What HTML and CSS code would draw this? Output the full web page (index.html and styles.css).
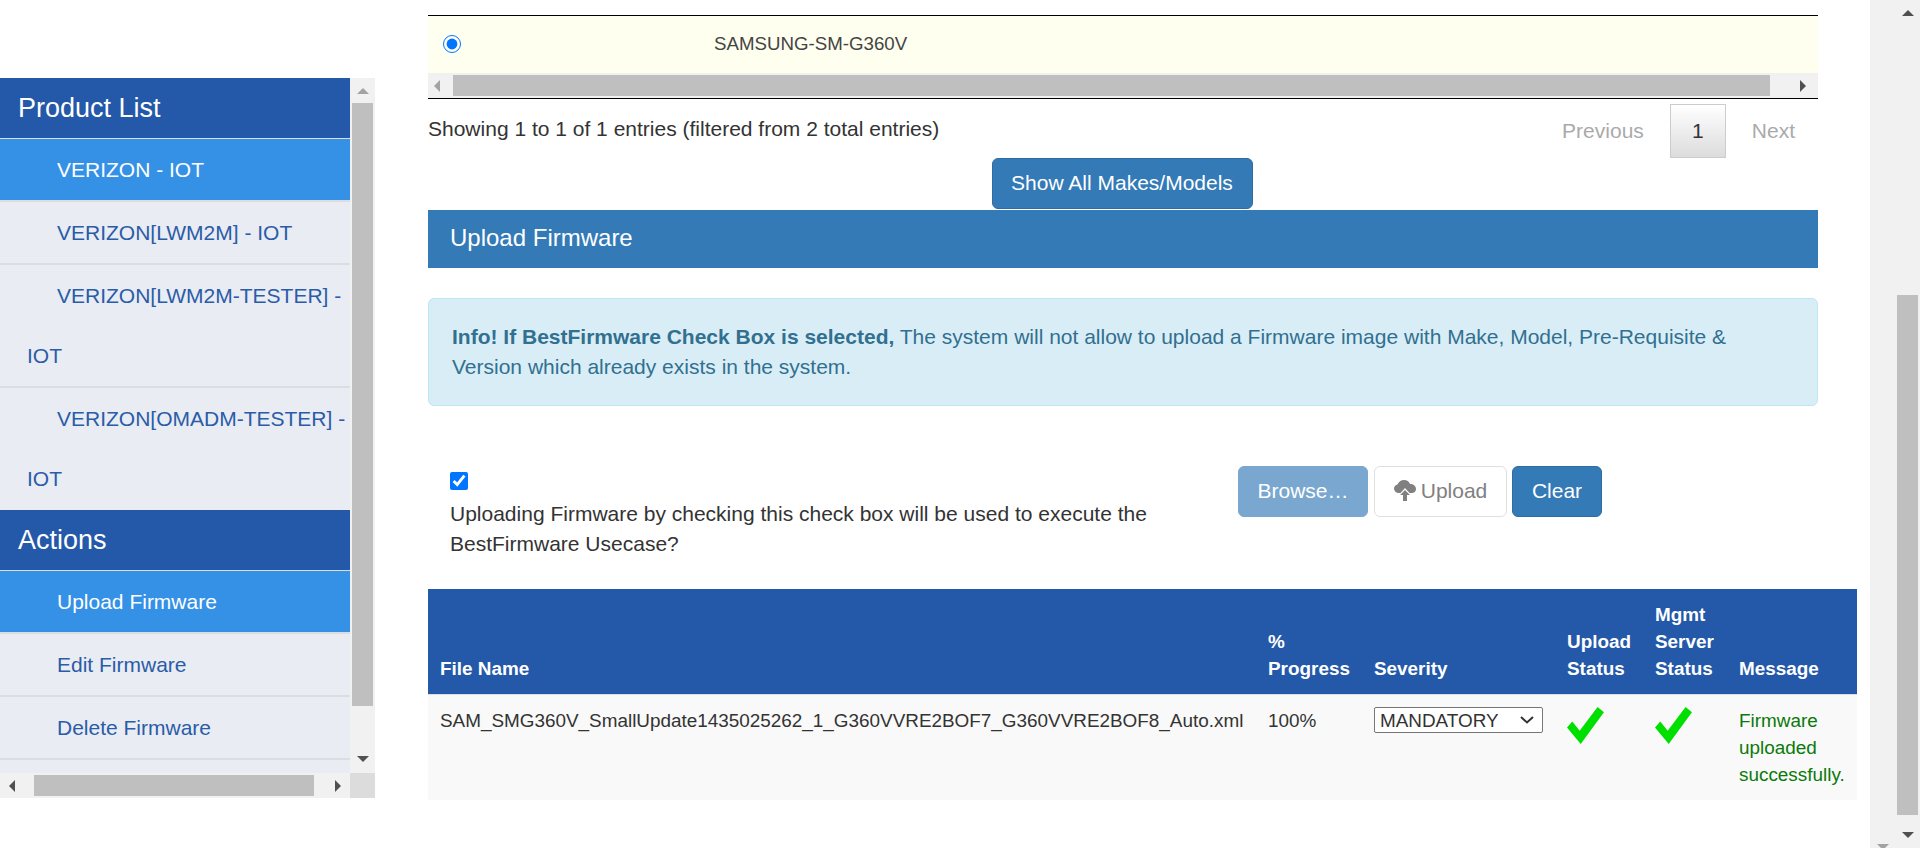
FILE: index.html
```html
<!DOCTYPE html>
<html>
<head>
  <title>Upload Firmware</title>
  <link rel="stylesheet" href="styles.css">
</head>
<body>
  <div class="page">

    <aside class="side">
      <div class="side-content">
        <h3 class="side-title">Product List</h3>
        <ul class="side-list">
          <li class="active"><a>VERIZON - IOT</a></li>
          <li><a>VERIZON[LWM2M] - IOT</a></li>
          <li><a>VERIZON[LWM2M-TESTER] - IOT</a></li>
          <li class="end"><a>VERIZON[OMADM-TESTER] - IOT</a></li>
        </ul>
        <h3 class="side-title">Actions</h3>
        <ul class="side-list">
          <li class="active"><a>Upload Firmware</a></li>
          <li><a>Edit Firmware</a></li>
          <li><a>Delete Firmware</a></li>
        </ul>
      </div>
      <div class="vbar side-vbar">
        <span class="arrow up off"></span>
        <span class="vthumb side-vthumb"></span>
        <span class="arrow down"></span>
      </div>
      <div class="hbar side-hbar">
        <span class="arrow left"></span>
        <span class="hthumb side-hthumb"></span>
        <span class="arrow right"></span>
      </div>
      <div class="corner"></div>
    </aside>

    <main class="main">
      <div class="inner">
        <div class="model-table">
          <div class="model-row">
            <span class="model-radio"><input type="radio" name="model" checked></span>
            <span class="model-name">SAMSUNG-SM-G360V</span>
          </div>
          <div class="hbar model-hbar">
            <span class="arrow left off"></span>
            <span class="hthumb model-hthumb"></span>
            <span class="arrow right"></span>
          </div>
        </div>

        <div class="table-info">
          <div>Showing 1 to 1 of 1 entries (filtered from 2 total entries)</div>
          <div class="pager">
            <a class="pager-link">Previous</a>
            <a class="pager-current">1</a>
            <a class="pager-link pager-next">Next</a>
          </div>
        </div>

        <div class="show-all"><button class="btn btn-primary btn-show">Show All Makes/Models</button></div>

        <div class="panel-head">Upload Firmware</div>

        <div class="alert">
          <strong>Info! If BestFirmware Check Box is selected,</strong> The system will not allow to upload a Firmware image with Make, Model, Pre-Requisite &amp; Version which already exists in the system.
        </div>

        <div class="upload-row">
          <div class="upload-check">
            <input type="checkbox" checked>
            <p>Uploading Firmware by checking this check box will be used to execute the BestFirmware Usecase?</p>
          </div>
          <div class="upload-btns">
            <button class="btn btn-primary btn-browse">Browse…</button>
            <button class="btn btn-upload">
              <svg width="22" height="21" viewBox="0 0 22 21"><path d="M5 13C2 13 0 11 0 8.5 0 6.5 1.5 5 3.5 4.500 4.500 2 7 0 10 0c3 0 5 1.500 6 4 3.500 0 6 2 6 5 0 2.500-2 4-4 4h-2.500L11 8l-4.500 5z"/><path d="M11 10l5 5h-3v6H9v-6H6z"/></svg>
              Upload
            </button>
            <button class="btn btn-primary btn-clear">Clear</button>
          </div>
        </div>
      </div>

      <table class="files">
        <thead>
          <tr>
            <th class="col-name">File Name</th>
            <th class="col-progress">% Progress</th>
            <th class="col-severity">Severity</th>
            <th class="col-upload">Upload Status</th>
            <th class="col-mgmt">Mgmt Server Status</th>
            <th class="col-message">Message</th>
          </tr>
        </thead>
        <tbody>
          <tr>
            <td>SAM_SMG360V_SmallUpdate1435025262_1_G360VVRE2BOF7_G360VVRE2BOF8_Auto.xml</td>
            <td>100%</td>
            <td>
              <select class="severity">
                <option>MANDATORY</option>
                <option>OPTIONAL</option>
              </select>
            </td>
            <td><svg class="tick" width="38" height="37" viewBox="0 0 36 36" preserveAspectRatio="none"><polygon points="5,14 12,23 29,0 35,5 13,36 0,20"/></svg></td>
            <td><svg class="tick" width="38" height="37" viewBox="0 0 36 36" preserveAspectRatio="none"><polygon points="5,14 12,23 29,0 35,5 13,36 0,20"/></svg></td>
            <td class="msg-ok">Firmware uploaded successfully.</td>
          </tr>
        </tbody>
      </table>
    </main>

    <div class="page-bars">
      <div class="vbar outer-bar">
        <span class="arrow down off"></span>
      </div>
      <div class="vbar inner-bar">
        <span class="arrow up"></span>
        <span class="vthumb inner-vthumb"></span>
        <span class="arrow down"></span>
      </div>
    </div>

  </div>
</body>
</html>
```

FILE: styles.css
```css
* { box-sizing: border-box; }
html, body { margin: 0; padding: 0; height: 848px; overflow: hidden; background: #fff; }
body { font-family: "Liberation Sans", Arial, sans-serif; font-size: 21px; line-height: 30px; color: #333; }

.page { display: flex; height: 848px; }

/* fake scrollbars */
.vbar { display: flex; flex-direction: column; align-items: center; background: #f1f1f1; }
.hbar { display: flex; align-items: center; background: #f1f1f1; }
.vthumb { display: block; width: 21px; background: #bfbfbf; }
.hthumb { display: block; height: 21px; background: #bfbfbf; }
.arrow { display: block; width: 0; height: 0; border-style: solid; border-color: transparent; }
.arrow.up { border-width: 0 6px 6px; border-bottom-color: #505050; }
.arrow.down { border-width: 6px 6px 0; border-top-color: #505050; }
.arrow.left { border-width: 6px 6px 6px 0; border-right-color: #505050; }
.arrow.right { border-width: 6px 0 6px 6px; border-left-color: #505050; }
.arrow.up.off { border-bottom-color: #a3a3a3; }
.arrow.down.off { border-top-color: #a3a3a3; }
.arrow.left.off { border-right-color: #a3a3a3; }

/* sidebar */
.side { flex: none; display: grid; grid-template-columns: 350px 25px; grid-template-rows: 695px 25px; width: 375px; height: 720px; margin-top: 78px; }
.side-content { overflow: hidden; background: #e9ecf2; }
.side-title { margin: 0; height: 61px; padding-left: 18px; border-bottom: 1px solid #ddd; background: #2458a8; color: #fff; font-size: 27px; font-weight: normal; line-height: 60px; }
.side-list { margin: 0; padding: 0; list-style: none; }
.side-list li { padding: 1px 0 0 27px; text-indent: 30px; border-bottom: 2px solid #dcdde1; font-size: 21px; line-height: 60px; color: #2a5ca8; }
.side-list li.active { background: #3491e5; color: #fff; }
.side-list li.end { border-bottom: 1px solid #e9ecf2; }
.side-vbar { padding-top: 10px; }
.side-vbar .arrow.up { margin-bottom: 9px; }
.side-vthumb { height: 603px; }
.side-vbar .arrow.down { margin-top: 50px; }
.side-hbar { padding: 0 9px 0 9px; }
.side-hthumb { width: 280px; margin: 0 21px 0 19px; }
.corner { background: #dcdcdc; }

/* main column */
.main { flex: none; width: 1429px; margin-left: 53px; padding-top: 15px; }
.inner { width: 1390px; }

.model-table { border-top: 1px solid #000; border-bottom: 1px solid #000; }
.model-row { display: flex; align-items: center; height: 57px; padding-bottom: 2px; background: #feffef; font-size: 18.7px; color: #444; }
.model-radio { display: flex; width: 286px; padding-left: 15px; }
.model-radio input { width: 18px; height: 18px; margin: 0; accent-color: #0075ff; }
.model-hbar { height: 25px; padding: 2px 6px; }
.model-hthumb { width: 1317px; margin: 0 30px 0 13px; }

.table-info { display: flex; justify-content: space-between; align-items: center; height: 59px; }
.pager { display: flex; align-items: center; margin-top: 5px; }
.pager-link { padding: 0 26px; color: #aaa; }
.pager-next { padding-right: 23px; }
.pager-current { width: 56px; height: 54px; border: 1px solid #ccc; background: linear-gradient(#fff, #dcdcdc); text-align: center; line-height: 52px; color: #333; }

.btn { display: block; margin: 0; border: 1px solid #2e6da4; border-radius: 6px; font-family: inherit; font-size: 21px; line-height: 28px; height: 51px; padding: 0 0 2px; }
.btn-primary { background: #337ab7; color: #fff; }
.show-all { display: flex; justify-content: center; margin-bottom: 1px; padding-right: 2px; }
.btn-show { width: 261px; }

.panel-head { height: 58px; padding-left: 22px; background: #337ab7; color: #fff; font-size: 24px; line-height: 56px; }

.alert { height: 108px; margin-top: 30px; padding: 23px; border: 1px solid #bce8f1; border-radius: 6px; background: #d9edf7; color: #31708f; }

.upload-row { display: flex; height: 123px; margin-top: 60px; }
.upload-check { width: 810px; padding: 6px 67px 0 22px; }
.upload-check input { display: block; width: 18px; height: 18px; margin: 0; accent-color: #0075ff; }
.upload-check p { margin: 9px 0 0; }
.upload-btns { display: flex; align-items: flex-start; }
.btn-browse { width: 130px; border-color: #7aa7cf; background: #7aa7cf; }
.btn-upload { display: flex; align-items: center; justify-content: center; gap: 5px; width: 133px; margin: 0 5px 0 6px; border-color: #e0e0e0; background: #fff; color: #808080; }
.btn-upload svg { fill: #808080; }
.btn-clear { width: 90px; }

/* upload results */
.files { width: 1429px; border-collapse: collapse; table-layout: fixed; font-size: 18.9px; line-height: 27px; }
.files th { padding: 12px; border-bottom: 1px solid #ddd; background: #2458a8; color: #fff; font-weight: bold; text-align: left; vertical-align: bottom; }
.files td { padding: 12px; background: #f9f9f9; vertical-align: top; }
.col-name { width: 828px; }
.col-progress { width: 106px; }
.col-severity { width: 193px; }
.col-upload { width: 88px; }
.col-mgmt { width: 84px; }
.severity { display: block; width: 169px; height: 26px; margin: 0; padding: 0 0 0 5px; border: 1px solid #767676; border-radius: 2px; appearance: none; background: #fff url("data:image/svg+xml,%3Csvg xmlns='http://www.w3.org/2000/svg' width='14' height='8'%3E%3Cpath d='M1 1l6 5.500 6-5.500' fill='none' stroke='%23333' stroke-width='2'/%3E%3C/svg%3E") no-repeat right 8px center; font-family: inherit; font-size: 18.9px; color: #333; }
.tick { display: block; fill: #00e000; }
.msg-ok { color: #0a7a0a; }

.page-bars { flex: none; display: flex; width: 50px; margin-left: 13px; }
.outer-bar { width: 25px; justify-content: flex-end; }
.outer-bar .arrow { margin-bottom: -2px; }
.inner-bar { width: 25px; padding-top: 10px; }
.inner-bar .arrow.up { margin-bottom: 279px; }
.inner-vthumb { height: 520px; }
.inner-bar .arrow.down { margin-top: 17px; }
```
